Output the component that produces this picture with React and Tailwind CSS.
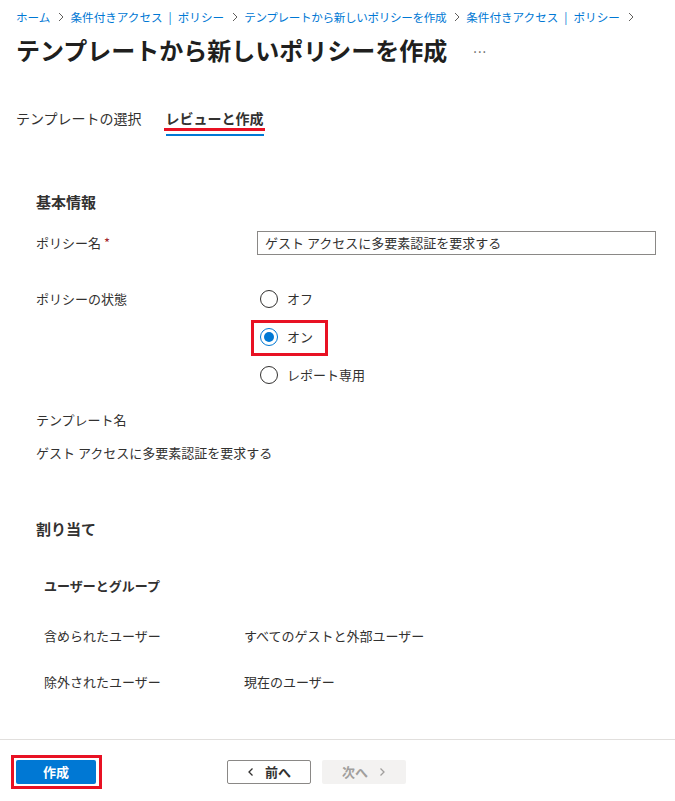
import React from "react";

const font = { fontFamily: '"Noto Sans CJK JP", "Noto Sans", sans-serif' };

function Chevron({ className = "" }) {
  return (
    <svg width="6" height="10" viewBox="0 0 6 10" className={className}>
      <path d="M1 1l4 4-4 4" fill="none" stroke="currentColor" strokeWidth="1" />
    </svg>
  );
}

function Radio({ checked, label, highlight }) {
  return (
    <div className="relative flex items-center h-[20px]">
      {highlight && (
        <span className="absolute left-[-9px] top-[-7px] w-[77px] h-[36px] border-[3px] border-[#e81123]" />
      )}
      <span
        className={
          "w-[18px] h-[18px] rounded-full border flex items-center justify-center bg-white " +
          (checked ? "border-[#0078d4]" : "border-[#323130]")
        }
      >
        {checked && <span className="w-[10px] h-[10px] rounded-full bg-[#0078d4]" />}
      </span>
      <span className="ml-[9px] text-[13px] leading-[20px] text-[#323130]">{label}</span>
    </div>
  );
}

function Crumb({ a, b, narrow }) {
  return (
    <span className="flex items-center">
      <span className={narrow ? "tracking-[-0.35px]" : ""}>{a}</span>
      {b && (
        <>
          <span className="mx-[6px]">|</span>
          <span>{b}</span>
        </>
      )}
    </span>
  );
}

export default function App() {
  const crumbs = [
    ["ホーム"],
    ["条件付きアクセス", "ポリシー"],
    ["テンプレートから新しいポリシーを作成", null, true],
    ["条件付きアクセス", "ポリシー"],
  ];
  return (
    <div className="w-[675px] h-[801px] bg-white text-[#323130] flex flex-col overflow-hidden" style={font}>
      <div className="flex-1 px-[16px]">
        {/* breadcrumb */}
        <div className="flex items-center pt-[9px] h-[25px] text-[11.6px] leading-[16px] text-[#0078d4] whitespace-nowrap">
          {crumbs.map((c, i) => (
            <React.Fragment key={i}>
              <Crumb a={c[0]} b={c[1]} narrow={c[2]} />
              <Chevron className="ml-[8px] mr-[6px] text-[#605e5c]" />
            </React.Fragment>
          ))}
        </div>
        {/* title */}
        <div className="flex items-center mt-[9px] h-[32px]">
          <h1 className="text-[24px] leading-[32px] font-bold text-[#201f1e] whitespace-nowrap">
            テンプレートから新しいポリシーを作成
          </h1>
          <span className="ml-[26px] text-[13px] text-[#605e5c] tracking-[1px] -mt-[4px]">...</span>
        </div>
        {/* tabs */}
        <div className="flex mt-[42px] text-[14px] leading-[20px]">
          <div className="text-[#323130]">テンプレートの選択</div>
          <div className="ml-[22px] flex flex-col items-center">
            <div className="font-bold text-[#323130] px-[2px]">レビューと作成</div>
            <div className="w-[101px] h-[3px] bg-[#e81123]" />
            <div className="mt-[3px] w-[98px] h-[2px] bg-[#0078d4]" />
          </div>
        </div>

        <div className="pl-[20px]">
          {/* 基本情報 */}
          <div className="mt-[56px] text-[15px] leading-[20px] font-bold text-[#323130]">基本情報</div>

          <div className="mt-[19px] flex items-center">
            <div className="w-[221px] text-[13px] leading-[20px]">
              ポリシー名 <span className="text-[#a4262c]">*</span>
            </div>
            <div className="w-[399px] h-[24px] border border-[#8a8886] flex items-center px-[7px] text-[13px] leading-[20px] text-[#323130]">
              ゲスト アクセスに多要素認証を要求する
            </div>
          </div>

          <div className="mt-[34px] flex">
            <div className="w-[224px] text-[13px] leading-[20px]">ポリシーの状態</div>
            <div className="flex flex-col gap-[18px] pt-[0px]">
              <Radio label="オフ" />
              <Radio label="オン" checked highlight />
              <Radio label="レポート専用" />
            </div>
          </div>

          <div className="mt-[25px] text-[13px] leading-[20px]">テンプレート名</div>
          <div className="mt-[13px] text-[13px] leading-[20px]">ゲスト アクセスに多要素認証を要求する</div>

          <div className="mt-[56px] text-[15px] leading-[20px] font-bold">割り当て</div>

          <div className="pl-[8px]">
            <div className="mt-[37px] text-[13px] leading-[20px] font-bold">ユーザーとグループ</div>
            <div className="mt-[30px] flex text-[13px] leading-[20px]">
              <div className="w-[200px]">含められたユーザー</div>
              <div>すべてのゲストと外部ユーザー</div>
            </div>
            <div className="mt-[26px] flex text-[13px] leading-[20px]">
              <div className="w-[200px]">除外されたユーザー</div>
              <div>現在のユーザー</div>
            </div>
          </div>
        </div>
      </div>

      {/* footer */}
      <div className="h-[62px] border-t border-[#e1dfdd] flex items-start pt-[20px] px-[16px] shrink-0">
        <div className="relative">
          <span className="absolute left-[-5px] top-[-5px] w-[91px] h-[34px] border-[3px] border-[#e81123]" />
          <button className="w-[80px] h-[24px] bg-[#0078d4] text-white text-[13px] font-bold rounded-[2px] flex items-center justify-center">
            作成
          </button>
        </div>
        <button className="ml-[131px] w-[84px] h-[24px] border border-[#8a8886] rounded-[2px] bg-white text-[13px] font-bold text-[#323130] flex items-center justify-center">
          <svg width="8" height="10" viewBox="0 0 8 10" className="mr-[10px]">
            <path d="M5.5 1.5L2 5l3.5 3.5" fill="none" stroke="#323130" strokeWidth="1.3" />
          </svg>
          前へ
        </button>
        <button className="ml-[11px] w-[84px] h-[24px] rounded-[2px] bg-[#f3f2f1] text-[13px] font-bold text-[#a19f9d] flex items-center justify-center">
          次へ
          <svg width="8" height="10" viewBox="0 0 8 10" className="ml-[10px]">
            <path d="M2.5 1.5L6 5 2.5 8.5" fill="none" stroke="#a19f9d" strokeWidth="1.3" />
          </svg>
        </button>
      </div>
    </div>
  );
}
